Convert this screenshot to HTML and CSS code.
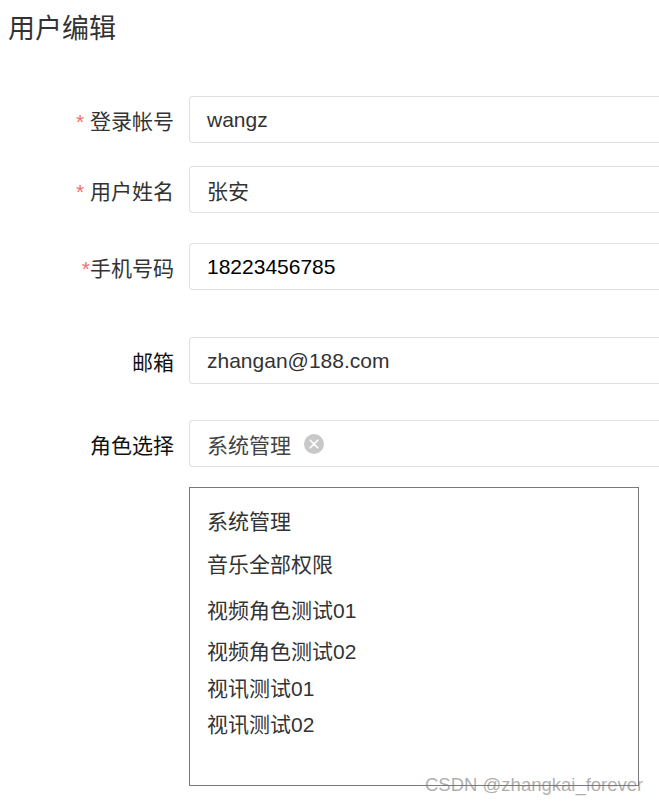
FILE: index.html
```html
<!DOCTYPE html>
<html lang="zh-CN">
<head>
    <meta charset="UTF-8">
    <title>用户编辑</title>
    <link rel="stylesheet" href="styles.css">
</head>
<body>
    <div class="page">
        <h1 class="title">用户编辑</h1>

        <form class="form">
            <div class="row row-first">
                <label class="label"><span class="req">* </span>登录帐号</label>
                <div class="input">wangz</div>
            </div>
            <div class="row row-2">
                <label class="label"><span class="req">* </span>用户姓名</label>
                <div class="input">张安</div>
            </div>
            <div class="row row-3">
                <label class="label"><span class="req">*</span>手机号码</label>
                <div class="input input-dark">18223456785</div>
            </div>
            <div class="row row-4">
                <label class="label label-dark">邮箱</label>
                <div class="input">zhangan@188.com</div>
            </div>
            <div class="row row-5">
                <label class="label label-dark">角色选择</label>
                <div class="input">
                    <span class="tag">系统管理</span>
                    <span class="tag-close">
                        <svg width="20" height="20" viewBox="0 0 20 20">
                            <circle cx="10" cy="10" r="10" fill="#c8c8c8"/>
                            <path d="M6.2 6.2 L13.8 13.8 M13.8 6.2 L6.2 13.8" stroke="#fff" stroke-width="1.6" stroke-linecap="round"/>
                        </svg>
                    </span>
                </div>
            </div>
            <div class="row row-list">
                <span></span>
                <ul class="options">
                    <li>系统管理</li>
                    <li class="gap-a">音乐全部权限</li>
                    <li class="gap-b">视频角色测试01</li>
                    <li class="gap-c">视频角色测试02</li>
                    <li class="gap-d">视讯测试01</li>
                    <li class="gap-e">视讯测试02</li>
                </ul>
            </div>
        </form>
    </div>

    <div class="watermark">CSDN @zhangkai_forever</div>
</body>
</html>
```

FILE: styles.css
```css
html, body {
    margin: 0;
    overflow: hidden;
}
body {
    font-family: "Liberation Sans", "Noto Sans CJK SC", sans-serif;
    color: #333;
    background: #fff;
    position: relative;
    height: 804px;
}
.title {
    margin: 16px 0 0 8px;
    font-size: 27px;
    line-height: 27px;
    font-weight: normal;
    color: #333;
}
.form {
    margin-top: 53px;
}
.row {
    display: grid;
    grid-template-columns: 189px 1fr;
    align-items: center;
}
.row-2 { margin-top: 23px; }
.row-3 { margin-top: 30px; }
.row-4 { margin-top: 47px; }
.row-5 { margin-top: 36px; }
.row-list {
    margin-top: 20px;
    align-items: start;
}
.label {
    text-align: right;
    padding-right: 15px;
    font-size: 21px;
    color: #333;
}
.label-dark {
    color: #111;
}
.req {
    color: #f56c6c;
}
.input {
    box-sizing: border-box;
    height: 47px;
    border: 1px solid #dcdfe6;
    border-right: none;
    border-radius: 4px 0 0 4px;
    padding: 0 17px;
    display: flex;
    align-items: center;
    font-size: 21px;
    color: #333;
}
.input-dark {
    color: #000;
}
.tag {
    color: #444;
}
.tag-close {
    display: inline-flex;
    margin-left: 13px;
}
.options {
    box-sizing: border-box;
    width: 450px;
    height: 299px;
    margin: 0;
    padding: 22px 17px 0;
    border: 1px solid #7a7a7a;
    list-style: none;
}
.options li {
    font-size: 21px;
    line-height: 24px;
    color: #333;
}
.options .gap-a { margin-top: 19px; }
.options .gap-b { margin-top: 22px; }
.options .gap-c { margin-top: 17px; }
.options .gap-d { margin-top: 13px; }
.options .gap-e { margin-top: 12px; }
.watermark {
    position: absolute;
    left: 425px;
    top: 774px;
    font-size: 18.5px;
    color: rgba(120, 120, 120, 0.6);
    white-space: nowrap;
}
```
